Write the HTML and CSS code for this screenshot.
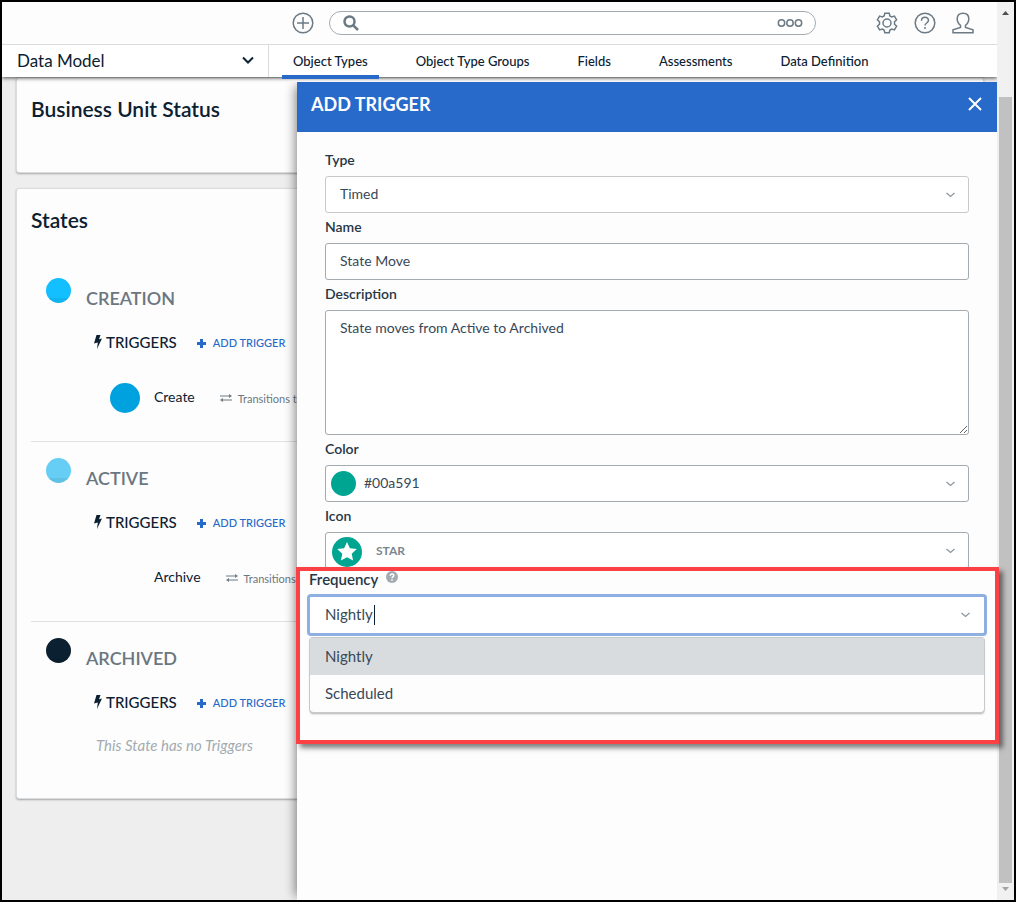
FILE: index.html
```html
<!DOCTYPE html>
<html lang="en">
<head>
	<title>Data Model</title>
	<meta charset="utf-8">
	<meta name="viewport" content="width=device-width, initial-scale=1">
	<link rel="stylesheet" href="styles.css">
</head>

<body>
<div class="window">
	<div class="app">

		<header class="topbar">
			<button class="icon-btn" aria-label="Add">
				<svg width="22" height="22" viewBox="0 0 22 22"><circle cx="11" cy="11" r="9.8"/><path d="M11 5v12M5 11h12"/></svg>
			</button>
			<div class="search">
				<svg width="16" height="16" viewBox="0 0 16 16"><circle cx="6.5" cy="6.5" r="5"/><path d="M10.3 10.3L15 15"/></svg>
				<input type="text" aria-label="Search">
				<button class="more" aria-label="More">
					<svg width="26" height="10" viewBox="0 0 26 10"><circle cx="4.5" cy="5" r="3.2"/><circle cx="13" cy="5" r="3.2"/><circle cx="21.500" cy="5" r="3.2"/></svg>
				</button>
			</div>
			<div class="tools">
				<button class="icon-btn" aria-label="Settings">
					<svg width="22" height="22" viewBox="0 0 22 22"><path d="M8.800 1.200h4.400l.7 2.800 1.700 1 2.800-.9 2.200 3.800-2.100 1.900v2.400l2.100 1.900-2.200 3.800-2.800-.9-1.700 1-.7 2.800H8.800L8.100 18l-1.700-1-2.800.9-2.200-3.800 2.100-1.900V9.800L1.400 7.900l2.200-3.800 2.800.9 1.700-1z"/><circle cx="11" cy="11" r="4"/></svg>
				</button>
				<button class="icon-btn" aria-label="Help">
					<svg width="22" height="22" viewBox="0 0 22 22"><circle cx="11" cy="11" r="9.800"/><path d="M7.500 8.800C7.500 4.300 14.500 4.300 14.500 8.300c0 2.700-3.500 2.700-3.500 5.200M11 15v2"/></svg>
				</button>
				<button class="icon-btn" aria-label="Account">
					<svg width="22" height="22" viewBox="0 0 22 22"><path d="M8.500 15.500v-2.200C6 11.500 5.200 9 5.200 6.800 5.200 3.200 7.500 1.200 11 1.200s5.800 2 5.800 5.600c0 2.200-.8 4.700-3.300 6.500v2.200l7.500 2.200v3.100H1v-3.100z"/></svg>
				</button>
			</div>
		</header>

		<nav class="nav">
			<button class="section">
				Data Model
				<svg width="12" height="8" viewBox="0 0 12 8"><path d="M1 1.500l5 5 5-5"/></svg>
			</button>
			<div class="tabs">
				<a href="#" class="tab active">Object Types</a>
				<a href="#" class="tab">Object Type Groups</a>
				<a href="#" class="tab">Fields</a>
				<a href="#" class="tab">Assessments</a>
				<a href="#" class="tab">Data Definition</a>
			</div>
		</nav>

		<main class="content">
			<section class="card status">
				<h2>Business Unit Status</h2>
			</section>

			<section class="card states">
				<h2>States</h2>

				<div class="state">
					<div class="state-head"><span class="dot creation"></span><h3>CREATION</h3></div>
					<div class="triggers">
						<h4><svg width="8" height="14" viewBox="0 0 8 14"><path d="M2.500 0h4L5 4.200 8 3.500 3 14l.8-6.500L0 8.400z"/></svg>TRIGGERS</h4>
						<button class="add"><svg width="9" height="9" viewBox="0 0 9 9"><path d="M4.500 0v9M0 4.500h9"/></svg>ADD TRIGGER</button>
					</div>
					<div class="trigger">
						<span class="trigger-dot create"></span>
						<span class="trigger-name">Create</span>
						<span class="transition"><svg width="12" height="8" viewBox="0 0 12 8"><path d="M0 2h10M12 6H2"/><path class="head" d="M9 0l3 2-3 2zM3 4L0 6l3 2z"/></svg>Transitions to</span>
					</div>
				</div>

				<div class="state">
					<div class="state-head"><span class="dot live"></span><h3>ACTIVE</h3></div>
					<div class="triggers">
						<h4><svg width="8" height="14" viewBox="0 0 8 14"><path d="M2.500 0h4L5 4.200 8 3.500 3 14l.8-6.500L0 8.400z"/></svg>TRIGGERS</h4>
						<button class="add"><svg width="9" height="9" viewBox="0 0 9 9"><path d="M4.500 0v9M0 4.500h9"/></svg>ADD TRIGGER</button>
					</div>
					<div class="trigger">
						<span class="trigger-dot"></span>
						<span class="trigger-name">Archive</span>
						<span class="transition"><svg width="12" height="8" viewBox="0 0 12 8"><path d="M0 2h10M12 6H2"/><path class="head" d="M9 0l3 2-3 2zM3 4L0 6l3 2z"/></svg>Transitions to</span>
					</div>
				</div>

				<div class="state">
					<div class="state-head"><span class="dot archived"></span><h3>ARCHIVED</h3></div>
					<div class="triggers">
						<h4><svg width="8" height="14" viewBox="0 0 8 14"><path d="M2.500 0h4L5 4.200 8 3.500 3 14l.8-6.500L0 8.400z"/></svg>TRIGGERS</h4>
						<button class="add"><svg width="9" height="9" viewBox="0 0 9 9"><path d="M4.500 0v9M0 4.500h9"/></svg>ADD TRIGGER</button>
					</div>
					<p class="empty">This State has no Triggers</p>
				</div>
			</section>

			<!-- Drawer slides over the cards -->
			<aside class="drawer">
				<div class="drawer-head">
					<h2>ADD TRIGGER</h2>
					<button aria-label="Close"><svg width="14" height="14" viewBox="0 0 14 14"><path d="M1 1l12 12M13 1L1 13"/></svg></button>
				</div>

				<form class="form">
					<label for="type">Type</label>
					<div class="field">
						<select id="type" class="light"><option>Timed</option></select>
						<svg class="arrow" width="9" height="6" viewBox="0 0 9 6"><path d="M.5 1l4 3.500 4-3.500"/></svg>
					</div>

					<label for="name">Name</label>
					<input id="name" type="text" value="State Move">

					<label for="description">Description</label>
					<textarea id="description">State moves from Active to Archived</textarea>

					<label for="color">Color</label>
					<div class="field">
						<span class="swatch"></span>
						<select id="color" class="with-swatch"><option>#00a591</option></select>
						<svg class="arrow" width="9" height="6" viewBox="0 0 9 6"><path d="M.5 1l4 3.500 4-3.500"/></svg>
					</div>

					<label for="icon">Icon</label>
					<div class="field">
						<svg class="star" width="30" height="30" viewBox="0 0 30 30"><circle cx="15" cy="15" r="15"/><path d="M15 5l2.900 6.300 6.900.8-5.100 4.700 1.400 6.800-6.100-3.400-6.100 3.400 1.400-6.800-5.100-4.700 6.900-.8z"/></svg>
						<select id="icon" class="with-icon"><option>STAR</option></select>
						<svg class="arrow" width="9" height="6" viewBox="0 0 9 6"><path d="M.5 1l4 3.500 4-3.500"/></svg>
					</div>
				</form>

				<div class="highlight">
					<div class="frequency-label">
						<label for="frequency">Frequency</label>
						<svg width="12" height="12" viewBox="0 0 12 12"><circle cx="6" cy="6" r="6"/><path d="M4.200 4.800C4.200 2.500 7.800 2.500 7.800 4.500 7.800 5.900 6 5.800 6 7.200M6 8.200v1.600"/></svg>
					</div>
					<div class="field">
						<input id="frequency" type="text" role="combobox" aria-expanded="true" aria-controls="frequency-list" value="Nightly">
						<span class="caret"></span>
						<svg class="arrow" width="9" height="6" viewBox="0 0 9 6"><path d="M.5 1l4 3.500 4-3.500"/></svg>
					</div>
					<ul id="frequency-list" class="options" role="listbox">
						<li role="option" aria-selected="true">Nightly</li>
						<li role="option" aria-selected="false">Scheduled</li>
					</ul>
				</div>
			</aside>
		</main>
	</div>

	<div class="scrollbar">
		<svg width="7" height="4" viewBox="0 0 7 4"><path fill="#505050" d="M3.500 0L7 4H0z"/></svg>
		<div class="thumb"></div>
		<svg width="7" height="4" viewBox="0 0 7 4"><path fill="#a3a3a3" d="M0 0h7L3.500 4z"/></svg>
	</div>
</div>
</body>

</html>
```
FILE: styles.css
```css
* {
	box-sizing: border-box;
}

body {
	margin: 0;
	font-family: Lato, "Open Sans", sans-serif;
	font-size: 14px;
	color: #0b2030;
}

h2, h3, h4, p, ul {
	margin: 0;
	padding: 0;
}

button {
	border: 0;
	padding: 0;
	background: none;
	font: inherit;
	color: inherit;
	cursor: pointer;
}

svg {
	display: block;
	flex: none;
	fill: none;
	stroke: #6b7a85;
	stroke-width: 1.5;
}

.window {
	display: flex;
	min-height: 100vh;
	border: 2px solid #000;
}

.app {
	flex: 1;
	display: flex;
	flex-direction: column;
	min-width: 0;
}

/* Top bar */

.topbar {
	display: flex;
	align-items: center;
	height: 43px;
	padding: 0 23px 0 290px;
	border-bottom: 1px solid #d8dcde;
	background: #fdfdfd;
}

.search {
	display: flex;
	align-items: center;
	flex: 0 1 487px;
	height: 24px;
	margin-left: 15px;
	padding: 0 12px 0 13px;
	border: 1px solid #a3abb1;
	border-radius: 12px;
	background: #fff;
}

.search > svg {
	stroke-width: 2.5;
}

.search input {
	flex: 1;
	min-width: 0;
	height: 20px;
	border: 0;
	outline: 0;
	background: none;
}

.tools {
	display: flex;
	gap: 16px;
	margin-left: auto;
}

/* Navigation */

.nav {
	position: relative;
	z-index: 2;
	display: flex;
	height: 32px;
	background: #fff;
	box-shadow: 0 1px 4px rgba(0, 0, 0, .7);
	clip-path: inset(0 0 -8px 0);
}

.section {
	display: flex;
	justify-content: space-between;
	align-items: center;
	width: 267px;
	padding: 0 14px 2px 15px;
	border-right: 1px solid #d8dcde;
	font-size: 17px;
}

.section svg {
	stroke: #0b2030;
	stroke-width: 2;
}

.tabs {
	display: flex;
	gap: 26px;
	padding-left: 13px;
}

.tab {
	position: relative;
	padding: 0 11px;
	font-size: 13px;
	font-weight: 500;
	line-height: 33px;
	color: #0b2030;
	text-decoration: none;
	white-space: nowrap;
}

.tab.active:after {
	content: "";
	position: absolute;
	left: 0;
	right: 0;
	bottom: -2px;
	height: 4px;
	background: #286aca;
}

/* Cards */

.content {
	position: relative;
	flex: 1;
	padding: 0 13px 14px 14px;
	background: #eee;
}

.card {
	padding: 17px 14px 0;
	border: 1px solid #dadde0;
	border-radius: 3px;
	background: #fdfdfd;
	box-shadow: 0 1px 2px rgba(0, 0, 0, .3);
}

.card h2 {
	font-size: 21px;
	font-weight: 600;
	line-height: 28px;
}

.status {
	height: 96px;
}

.states {
	margin-top: 15px;
	padding-bottom: 43px;
}

.states h2 {
	margin-bottom: 28px;
}

.state {
	padding: 16px 15px 28px;
	border-bottom: 1px solid #dfe1e3;
}

.state:last-child {
	padding-bottom: 0;
	border-bottom: 0;
}

.state-head {
	display: flex;
	gap: 15px;
}

.state-head h3 {
	padding-top: 7px;
	font-size: 18px;
	font-weight: 600;
	line-height: 26px;
	color: #6b777f;
}

.dot {
	width: 25px;
	height: 25px;
	border-radius: 50%;
	background-image: linear-gradient(transparent 80%, rgba(0, 0, 0, .06) 80%);
}

.creation { background-color: #13bfff; }
.live { background-color: #66cdf5; }
.archived { background-color: #0b2030; }

.triggers {
	display: flex;
	align-items: center;
	gap: 20px;
	margin: 20px 0 0 48px;
	line-height: 20px;
}

.triggers h4 {
	display: flex;
	align-items: center;
	gap: 4px;
	font-size: 15px;
	font-weight: 500;
}

.triggers h4 svg {
	fill: #0b2030;
	stroke: none;
}

.add {
	display: flex;
	align-items: center;
	gap: 7px;
	padding-top: 2px;
	font-size: 11px;
	font-weight: 500;
	color: #286aca;
	white-space: nowrap;
}

.add svg {
	stroke: #286aca;
	stroke-width: 3;
}

.trigger {
	display: flex;
	align-items: center;
	height: 30px;
	margin: 30px 0 0 64px;
}

.trigger-dot {
	width: 30px;
	height: 30px;
	margin-right: 14px;
	border-radius: 50%;
}

.create {
	background: #00a1df;
}

.trigger-name {
	margin-right: 25px;
	padding-bottom: 4px;
}

.transition {
	display: flex;
	align-items: center;
	gap: 6px;
	font-size: 11px;
	color: #6b777f;
	white-space: nowrap;
}

.transition svg {
	stroke-width: 1;
}

.transition .head {
	fill: #6b7a85;
	stroke: none;
}

.empty {
	margin: 22px 0 0 50px;
	font-size: 15px;
	font-style: italic;
	line-height: 20px;
	color: #a3abb1;
}

/* Drawer */

.drawer {
	position: absolute;
	z-index: 1;
	top: 5px;
	right: 0;
	bottom: 0;
	left: 295px;
	background: #fdfdfd;
	box-shadow: -6px 0 10px -4px rgba(0, 0, 0, .45);
	clip-path: inset(0 -20px 0 -20px);
}

.drawer-head {
	display: flex;
	justify-content: space-between;
	align-items: center;
	height: 50px;
	padding: 0 15px 6px 14px;
	background: #286aca;
	color: #fff;
}

.drawer-head h2 {
	font-size: 18px;
	font-weight: 700;
}

.drawer-head svg {
	stroke: #fff;
	stroke-width: 2;
}

.form {
	display: flex;
	flex-direction: column;
	padding: 14px 28px 0;
}

label {
	font-weight: 600;
	color: #263746;
}

.form label {
	padding-bottom: 2px;
	line-height: 28px;
}

input,
textarea,
select {
	display: block;
	appearance: none;
	width: 100%;
	height: 37px;
	margin: 0;
	padding: 0 14px 2px;
	border: 1px solid #a3abb1;
	border-radius: 3px;
	outline: 0;
	background: #fff;
	font: inherit;
	color: #384857;
}

textarea {
	height: 125px;
	padding: 8px 14px;
	line-height: 18px;
	resize: vertical;
}

select.light {
	border-color: #c6cacd;
}

.field {
	position: relative;
}

.arrow {
	position: absolute;
	top: 50%;
	right: 14px;
	margin-top: -3px;
	stroke: #8d979e;
	stroke-width: 1.3;
}

.swatch {
	position: absolute;
	top: 6px;
	left: 6px;
	width: 25px;
	height: 25px;
	border-radius: 50%;
	background: #00a591;
}

.with-swatch {
	padding-left: 38px;
}

.star {
	position: absolute;
	top: 5px;
	left: 7px;
	fill: #00a591;
	stroke: none;
}

.star path {
	fill: #fff;
}

.with-icon {
	padding-bottom: 0;
	padding-left: 50px;
	font-size: 12px;
	font-weight: 700;
	color: #7b868e;
}

/* Highlighted group, sits on the end of the form and over the scrollbar edge */

.highlight {
	position: relative;
	margin: -2px -2px 0 -1px;
	padding: 0 8px 28px 7px;
	border: 4px solid #fb4143;
	background: #fdfdfd;
	box-shadow: 4px 4px 5px rgba(0, 0, 0, .5);
	font-size: 15px;
}

.frequency-label {
	display: flex;
	gap: 8px;
	height: 23px;
	padding-left: 2px;
	line-height: 16px;
}

.frequency-label svg {
	fill: #a3abb1;
	stroke: none;
}

.frequency-label path {
	fill: none;
	stroke: #fff;
}

#frequency {
	height: 42px;
	padding: 0 15px 2px;
	border: 3px solid #8fafe2;
	border-radius: 4px;
}

.highlight .arrow {
	right: 17px;
}

.caret {
	position: absolute;
	top: 11px;
	left: 67px;
	width: 1px;
	height: 20px;
	background: #0b2030;
}

.options {
	margin: 2px 3px 0;
	border-radius: 3px;
	box-shadow: 0 0 0 1px #c8caca, 0 2px 2px rgba(0, 0, 0, .3);
	list-style: none;
	line-height: 37px;
	color: #384857;
}

.options li {
	padding: 0 15px;
}

.options [aria-selected="true"] {
	background: #d9dcdf;
}

/* Scrollbar */

.scrollbar {
	display: flex;
	flex-direction: column;
	align-items: center;
	width: 17px;
	padding: 9px 2px;
	background: #f1f1f1;
}

.scrollbar svg {
	stroke: none;
}

.thumb {
	flex: 1;
	width: 13px;
	margin: 82px 0 4px;
	background: #c1c1c1;
}
```
